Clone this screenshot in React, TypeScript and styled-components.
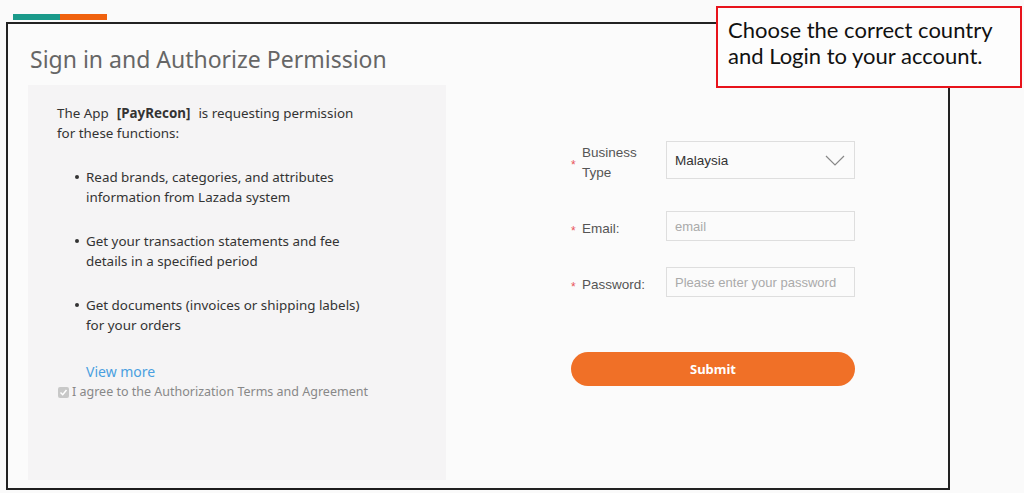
import React from "react";
import styled, { createGlobalStyle } from "styled-components";

// Page copy
const permissions = [
  ["Read brands, categories, and attributes", "information from Lazada system"],
  ["Get your transaction statements and fee", "details in a specified period"],
  ["Get documents (invoices or shipping labels)", "for your orders"],
];

const GlobalStyle = createGlobalStyle`
  html, body {
    margin: 0;
    padding: 0;
    background: #fafafa;
  }
  body {
    font-family: "Noto Sans", "Open Sans", sans-serif;
  }
`;

const Page = styled.div`
  position: relative;
  width: 1024px;
  height: 493px;
  padding-top: 14px;
  box-sizing: border-box;
  overflow: hidden;
`;

// Two-colour strip above the frame
const Stripe = styled.div`
  display: flex;
  margin-left: 13px;
  height: 6px;
`;

const StripePart = styled.div<{ $color: string }>`
  width: 47px;
  background: ${(p) => p.$color};
`;

const Frame = styled.div`
  margin: 2px 0 0 6px;
  width: 944px;
  height: 468px;
  box-sizing: border-box;
  border: 2px solid #222;
  background: #fbfbfb;
  padding: 19px 0 0 20px;
`;

const Title = styled.h1`
  margin: 0;
  font-size: 23px;
  line-height: 33px;
  font-weight: 400;
  color: #666;
  padding-left: 2px;
`;

const Body = styled.div`
  display: flex;
  margin-top: 9px;
`;

// Grey permission panel on the left
const Panel = styled.div`
  width: 418px;
  height: 395px;
  box-sizing: border-box;
  background: #f5f4f5;
  padding: 18px 0 0 29px;
  font-size: 13.4px;
  line-height: 20px;
  color: #333;
`;

const Intro = styled.p`
  margin: 0;
  width: 308px;
`;

const AppName = styled.b`
  font-weight: 700;
  margin: 0 8px;
`;

const List = styled.ul`
  list-style: none;
  margin: 24px 0 0;
  padding: 0 0 0 29px;
  display: flex;
  flex-direction: column;
  gap: 24px;
`;

const Item = styled.li`
  position: relative;
  &::before {
    content: "";
    position: absolute;
    left: -11px;
    top: 8px;
    width: 4px;
    height: 4px;
    border-radius: 50%;
    background: #333;
  }
`;

const ViewMore = styled.a`
  display: block;
  margin: 27px 0 0 29px;
  font-size: 14px;
  color: #4a9fe0;
  text-decoration: none;
`;

const Agree = styled.label`
  display: flex;
  align-items: center;
  gap: 3px;
  margin-left: 1px;
  color: #888;
  font-size: 12.5px;
`;

const CheckBox = styled.span`
  width: 11px;
  height: 11px;
  border-radius: 2px;
  background: #c8c8c8;
  display: flex;
  align-items: center;
  justify-content: center;
`;

// Login form on the right
const Form = styled.form`
  margin: 55px 0 0 125px;
  width: 284px;
  display: flex;
  flex-direction: column;
`;

const Row = styled.div<{ $top: number }>`
  display: flex;
  align-items: center;
  margin-top: ${(p) => p.$top}px;
`;

const Label = styled.div`
  display: flex;
  align-items: center;
  width: 95px;
  padding-top: 3px;
  margin-bottom: -3px;
  font-family: "Liberation Sans", Arial, sans-serif;
  font-size: 13.5px;
  line-height: 20px;
  color: #555;
`;

const Star = styled.span`
  color: #e8545a;
  width: 11px;
  font-size: 12px;
  padding-top: 3px;
`;

const LabelText = styled.span`
  width: 72px;
`;

const Field = styled.div<{ $tall?: boolean }>`
  width: 189px;
  height: ${(p) => (p.$tall ? 38 : 30)}px;
  box-sizing: border-box;
  border: 1px solid #dedede;
  background: #fbfbfb;
  display: flex;
  align-items: center;
  justify-content: space-between;
  padding: 0 9px 0 8px;
  font-family: "Liberation Sans", Arial, sans-serif;
  font-size: 13px;
`;

const Value = styled.span`
  color: #333;
  font-size: 13.5px;
`;

const Placeholder = styled.span`
  color: #aaa;
`;

const Submit = styled.button`
  margin-top: 55px;
  width: 284px;
  height: 34px;
  border: none;
  border-radius: 17px;
  background: #f07027;
  color: #fff;
  font-family: "Noto Sans", sans-serif;
  font-weight: 700;
  font-size: 13px;
`;

// Annotation box laid over the screenshot
const Callout = styled.div`
  position: absolute;
  left: 716px;
  top: 6px;
  width: 306px;
  height: 82px;
  box-sizing: border-box;
  border: 2px solid #e8131b;
  background: #fdfdfd;
  padding: 9px 0 0 10px;
  font-family: Lato, sans-serif;
  font-size: 22px;
  line-height: 26px;
  color: #111;
`;

const App: React.FC = () => {
  return (
    <Page>
      <GlobalStyle />
      <Stripe>
        <StripePart $color="#1a9a8a" />
        <StripePart $color="#f0620e" />
      </Stripe>
      <Frame>
        <Title>Sign in and Authorize Permission</Title>
        <Body>
          <Panel>
            <Intro>
              The App<AppName>[PayRecon]</AppName>is requesting permission for these functions:
            </Intro>
            <List>
              {permissions.map(([a, b], i) => (
                <Item key={i}>
                  {a}
                  <br />
                  {b}
                </Item>
              ))}
            </List>
            <ViewMore href="#">View more</ViewMore>
            <Agree>
              <CheckBox>
                <svg width="9" height="9" viewBox="0 0 9 9">
                  <polyline points="1.5,4.5 3.7,6.7 7.5,2" fill="none" stroke="#fff" strokeWidth="1.5" />
                </svg>
              </CheckBox>
              I agree to the Authorization Terms and Agreement
            </Agree>
          </Panel>
          <Form>
            <Row $top={0}>
              <Label>
                <Star>*</Star>
                <LabelText>Business Type</LabelText>
              </Label>
              <Field $tall>
                <Value>Malaysia</Value>
                <svg width="20" height="11" viewBox="0 0 20 11">
                  <polyline points="1,1 10,10 19,1" fill="none" stroke="#888" strokeWidth="1.2" />
                </svg>
              </Field>
            </Row>
            <Row $top={31}>
              <Label>
                <Star>*</Star>
                <LabelText>Email:</LabelText>
              </Label>
              <Field>
                <Placeholder>email</Placeholder>
              </Field>
            </Row>
            <Row $top={26}>
              <Label>
                <Star>*</Star>
                <LabelText>Password:</LabelText>
              </Label>
              <Field>
                <Placeholder>Please enter your password</Placeholder>
              </Field>
            </Row>
            <Submit type="button">Submit</Submit>
          </Form>
        </Body>
      </Frame>
      <Callout>
        Choose the correct country
        <br />
        and Login to your account.
      </Callout>
    </Page>
  );
};

export default App;
